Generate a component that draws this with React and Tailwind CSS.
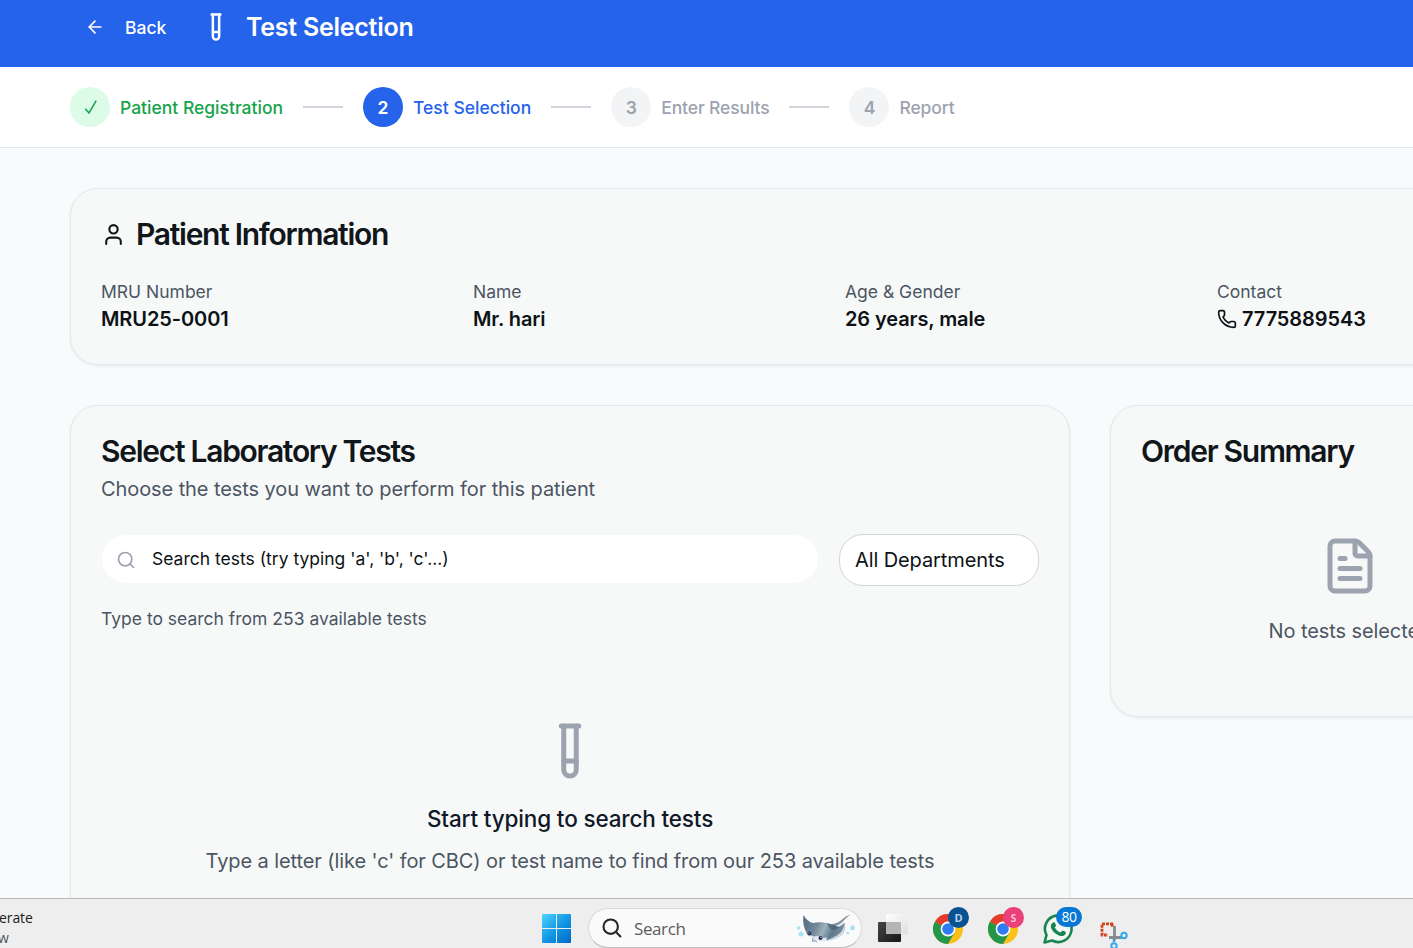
import { ArrowLeft, TestTube, User, Phone, Search, FileText } from 'lucide-react';

const card = 'rounded-[28px] border border-[#e2e8ee] bg-[#f7f9f8] shadow-[0_1px_3px_rgba(15,23,42,0.08)]';
const title = 'text-[30px] leading-[30px] font-semibold tracking-[-1.28px] text-[#10161a]';

function Step({ circle, text, mark, label }) {
  return (
    <div className="flex items-center gap-[10px]">
      <div className={'flex size-10 shrink-0 items-center justify-center rounded-full text-[17.5px] leading-[25px] font-semibold ' + circle}>{mark}</div>
      <span className={'pt-px text-[17.5px] leading-[25px] font-medium ' + text}>{label}</span>
    </div>
  );
}

function Check() {
  return (
    <svg viewBox="0 0 14 16" className="ml-px h-4 w-[14px]" fill="none" stroke="currentColor" strokeWidth="1.500">
      <path d="M1.300 9.800L5 14L12.200 1.600" />
    </svg>
  );
}

function Line() {
  return <div className="mx-5 h-[2px] w-10 shrink-0 bg-[#d1d5db]" />;
}

function Info({ label, children }) {
  return (
    <div>
      <p className="text-[17.5px] leading-[25px] text-[#4b5563]">{label}</p>
      <p className="flex items-center gap-[5px] text-[20px] leading-[30px] font-semibold tracking-[-0.1px] text-[#0d1216]">{children}</p>
    </div>
  );
}

function Chrome() {
  return (
    <svg viewBox="0 0 30 30" className="size-[30px]">
      <circle cx="15" cy="15" r="15" fill="#fbc116" />
      <path d="M15 15L2 7.5A15 15 0 0 0 15 30L21.5 18.7Z" fill="#24964a" />
      <path d="M15 15L2 7.5A15 15 0 0 1 28 7.5H15Z" fill="#e33b2e" />
      <circle cx="15" cy="15" r="7.4" fill="#fff" />
      <circle cx="15" cy="15" r="5.8" fill="#2d7cf0" />
    </svg>
  );
}

function Windows() {
  return (
    <svg viewBox="0 0 29 29" className="size-[29px]">
      <defs>
        <linearGradient id="win" x1="0" y1="0" x2="29" y2="29" gradientUnits="userSpaceOnUse">
          <stop stopColor="#4fd3ff" />
          <stop offset="0.5" stopColor="#1499e4" />
          <stop offset="1" stopColor="#0067c8" />
        </linearGradient>
      </defs>
      <path fill="url(#win)" d="M1 0H14V14H0V1Q0 0 1 0ZM15 0H28Q29 0 29 1V14H15ZM0 15H14V29H1Q0 29 0 28ZM15 15H29V28Q29 29 28 29H15Z" />
    </svg>
  );
}

function Manta() {
  return (
    <svg viewBox="0 0 60 32" className="h-8 w-[60px]">
      <defs>
        <linearGradient id="manta" x1="7" y1="6" x2="46" y2="24" gradientUnits="userSpaceOnUse">
          <stop stopColor="#566b7f" />
          <stop offset="0.35" stopColor="#6f8798" />
          <stop offset="0.55" stopColor="#9fb0bc" />
          <stop offset="0.75" stopColor="#5f7a8d" />
          <stop offset="1" stopColor="#7b8fa0" />
        </linearGradient>
      </defs>
      <path d="M34 12.500Q42 11.500 46 7.500Q50 3.500 54.500 2.500Q50 5.500 47.500 9Q43 13.500 38 14.500Z" fill="#8494a1" />
      <path d="M48.500 11Q50 19 45.500 23Q40 27 31 28.500L34 20Z" fill="#d8dee8" stroke="#a3acbb" strokeWidth=".5" />
      <path d="M7.500 3Q11 9.500 17 11Q23 9.500 31 11Q37 13 42 15Q46 14 48.500 11Q47.500 20 41 23.500Q36 26.500 31 28L24 28Q16 26 11 22Q6 13 7.500 3Z" fill="url(#manta)" />
      <path d="M31 11L37 12.700L43 15Q40 19 35 17.500Q32 15 31 11Z" fill="#456376" opacity=".7" />
      <path d="M11 19.500Q13 23 18 24.500L22 24L27 26L31 25.500L30 29L25 29.500L22 28L20 30.500L16.500 29.500L16 25.500L11.500 23Z" fill="#e4e9f4" />
      <path d="M17 25.500L16.500 29.500L19.500 28.500L21 30.500" fill="none" stroke="#7787ad" strokeWidth=".8" />
      <circle cx="13.300" cy="21.500" r="2" fill="#1f2c50" />
      <circle cx="24.500" cy="26" r="2" fill="#1f2c50" />
      <circle cx="13" cy="21" r=".6" fill="#fff" />
      <circle cx="25" cy="25.300" r=".6" fill="#fff" />
      <g fill="#a9e3f3">
        <circle cx="2.500" cy="16" r="1.800" />
        <circle cx="5" cy="22" r="2.500" />
        <circle cx="56.500" cy="15.800" r="2.500" />
        <circle cx="51.800" cy="21" r="1.600" />
      </g>
    </svg>
  );
}

function Taskbar() {
  return (
    <footer className="flex h-[50px] w-full shrink-0 items-start overflow-hidden border-t border-[#b9b9b9] bg-[#eeeeee] font-['Open_Sans','Noto_Sans',sans-serif]">
      <div className="mt-[9px] w-[542px] text-[14px] leading-[20px] text-[#1d1d1d]">
        <p className="-ml-px tracking-[-0.1px]">erate</p>
        <p className="-ml-[2px] text-[#555]">w</p>
      </div>
      <div className="mt-[15px]"><Windows /></div>
      <div className="mt-[9px] ml-[17px] flex h-10 w-[274px] items-center rounded-full border border-[#d9d9d9] border-b-[#bdbdbd] bg-[#fafafa] pl-[13px]">
        <svg viewBox="0 0 20 20" className="size-5" fill="none" stroke="#262626" strokeWidth="2.1" strokeLinecap="round">
          <circle cx="8.700" cy="8.700" r="7.200" />
          <path d="M14 14L18.400 18.400" />
        </svg>
        <span className="ml-[12px] w-[162px] pt-px text-[17px] leading-[24px] tracking-[-0.4px] text-[#5c5c5c]">Search</span>
        <Manta />
      </div>
      <svg viewBox="0 0 30 29" className="mt-[15px] ml-4 h-[29px] w-[30px]">
        <defs>
          <linearGradient id="dark" x1="0" y1="0" x2="1" y2="1"><stop stopColor="#454545" /><stop offset="1" stopColor="#171717" /></linearGradient>
          <linearGradient id="pale" x1="0" y1="0" x2="1" y2="1"><stop stopColor="#fff" /><stop offset="1" stopColor="#dedede" /></linearGradient>
        </defs>
        <rect x="0" y="8" width="23" height="20" rx="1" fill="url(#dark)" />
        <rect x="8" y="0" width="22" height="20" rx="1" fill="url(#pale)" />
        <rect x="8" y="8" width="15" height="12" fill="#b5b5b5" />
      </svg>
      <div className="relative mt-[15px] ml-[25px]">
        <Chrome />
        <span className="absolute -top-[7px] left-[15px] flex size-[21px] items-center justify-center rounded-full bg-[#075392] text-[11px] leading-none font-bold text-[#b9d4ee]">D</span>
      </div>
      <div className="relative mt-[15px] ml-[25px]">
        <Chrome />
        <span className="absolute -top-[7px] left-[15px] flex size-[21px] items-center justify-center rounded-full bg-[#ec407a] text-[10px] leading-none font-bold text-[#f8c4d8]">S</span>
      </div>
      <div className="relative mt-[15px] ml-[25px]">
        <svg viewBox="0 0 30 30" className="size-[30px]">
          <path d="M1.500 28.500L3.500 21A13.300 13.300 0 1 1 9 26.500Z" fill="#f4f6f4" stroke="#1a8450" strokeWidth="2.600" strokeLinejoin="round" />
          <path d="M10 8.500Q11.500 7.800 12.300 9.500L13 11.500Q13 12.500 11.700 13.600Q13.600 17.300 17.500 18.500L19.200 16.800Q20 16.300 22.500 17.800Q23.400 18.500 22.300 20.500Q20 23 16 21.500Q9.800 19 7.900 13.500Q7.300 10.300 10 8.500Z" fill="#1a8450" />
        </svg>
        <span className="absolute -top-[7px] left-[13px] flex h-5 w-[26px] items-center justify-center rounded-full bg-[#0878d4] text-[14px] leading-none tracking-[-0.5px] text-white">80</span>
      </div>
      <svg viewBox="0 0 28 28" className="mt-[23px] ml-[27px] size-7 shrink-0" fill="none">
        <path d="M13 1.800H2V13H8M12.200 1.800V5" stroke="#d3441e" strokeWidth="2.800" strokeDasharray="3 1" />
        <path d="M14.500 4V18M9 15.500H21" stroke="#858b90" strokeWidth="2.800" />
        <path d="M14 17V20M20 15.500H22" stroke="#3d9ed0" strokeWidth="2.400" />
        <circle cx="24" cy="13.500" r="2.700" stroke="#35aae8" strokeWidth="2" />
        <circle cx="14" cy="24" r="2.700" stroke="#35aae8" strokeWidth="2" />
      </svg>
    </footer>
  );
}

export default function App() {
  return (
    <div className="flex h-[948px] w-full flex-col overflow-hidden bg-[#f9fafc] font-['Inter',sans-serif] whitespace-nowrap">
      <div className="min-h-0 flex-1 overflow-hidden">
        <header className="flex h-[67px] items-start bg-[#2563eb] pl-[85px] text-white">
          <div className="flex h-[54px] items-center">
            <ArrowLeft size={20} />
            <span className="ml-5 w-[76px] pt-px text-[17.5px] leading-[25px] font-medium">Back</span>
            <TestTube size={30} />
            <h1 className="ml-[15px] text-[25px] leading-[35px] font-semibold tracking-[-0.25px]">Test Selection</h1>
          </div>
        </header>
        <nav className="flex h-[81px] items-center border-b border-[#e2e8f0] bg-white pl-[70px]">
          <Step circle="bg-[#dcfce7] text-[#16a34a]" text="text-[#16a34a]" mark={<Check />} label="Patient Registration" />
          <Line />
          <Step circle="bg-[#2563eb] text-white" text="text-[#2563eb]" mark="2" label="Test Selection" />
          <Line />
          <Step circle="bg-[#f3f4f6] text-[#9ca3af]" text="tracking-[-0.12px] text-[#9ca3af]" mark="3" label="Enter Results" />
          <Line />
          <Step circle="bg-[#f3f4f6] text-[#9ca3af]" text="tracking-[-0.12px] text-[#9ca3af]" mark="4" label="Report" />
        </nav>
        <main className="w-[1590px] pt-10 pl-[70px]">
          <section className={card + ' h-[177px] p-[30px]'}>
            <h2 className={title + ' flex items-center gap-[10px]'}>
              <User size={25} />
              Patient Information
            </h2>
            <div className="mt-[30px] grid grid-cols-4 gap-[30px]">
              <Info label="MRU Number">MRU25-0001</Info>
              <Info label="Name">Mr. hari</Info>
              <Info label="Age & Gender">26 years, male</Info>
              <Info label="Contact"><Phone size={20} />7775889543</Info>
            </div>
          </section>
          <div className="mt-10 grid grid-cols-[1000px_480px] items-start gap-10">
            <section className={card + ' h-[600px] p-[30px]'}>
              <h2 className={title}>Select Laboratory Tests</h2>
              <p className="mt-2 text-[20px] leading-[30px] tracking-[-0.09px] text-[#4b5563]">Choose the tests you want to perform for this patient</p>
              <div className="mt-[30px] flex items-start gap-5">
                <div className="mt-px mr-px ml-px flex h-12 w-[716px] items-center gap-[16px] rounded-[24px] bg-white pl-[14px]">
                  <Search size={20} className="mt-[2px] text-[#9ca3af]" />
                  <span className="pb-[2px] text-[17.5px] leading-[25px] text-[#0d1216]">Search tests (try typing 'a', 'b', 'c'...)</span>
                </div>
                <div className="flex h-[52px] w-[200px] items-center rounded-[24px] border border-[#d1d5db] bg-white pl-[15px] text-[20px] leading-[30px] tracking-[-0.1px] text-[#0d1216]">All Departments</div>
              </div>
              <p className="mt-5 text-[17.5px] leading-[25px] text-[#4b5563]">Type to search from 253 available tests</p>
              <div className="mt-[90px] flex flex-col items-center">
                <TestTube size={60} className="text-[#9ca3af]" />
                <h3 className="mt-5 text-[22.5px] leading-[35px] font-medium tracking-[-0.15px] text-[#111827]">Start typing to search tests</h3>
                <p className="mt-[10px] text-[20px] leading-[30px] tracking-[-0.09px] text-[#4b5563]">Type a letter (like 'c' for CBC) or test name to find from our 253 available tests</p>
              </div>
            </section>
            <section className={card + ' h-[312px] p-[30px]'}>
              <h2 className={title}>Order Summary</h2>
              <div className="mt-[70px] flex flex-col items-center">
                <FileText size={60} className="text-[#9ca3af]" />
                <p className="mt-5 w-[163px] text-[20px] leading-[30px] tracking-[-0.09px] text-[#4b5563]">No tests selected</p>
              </div>
            </section>
          </div>
        </main>
      </div>
      <Taskbar />
    </div>
  );
}
